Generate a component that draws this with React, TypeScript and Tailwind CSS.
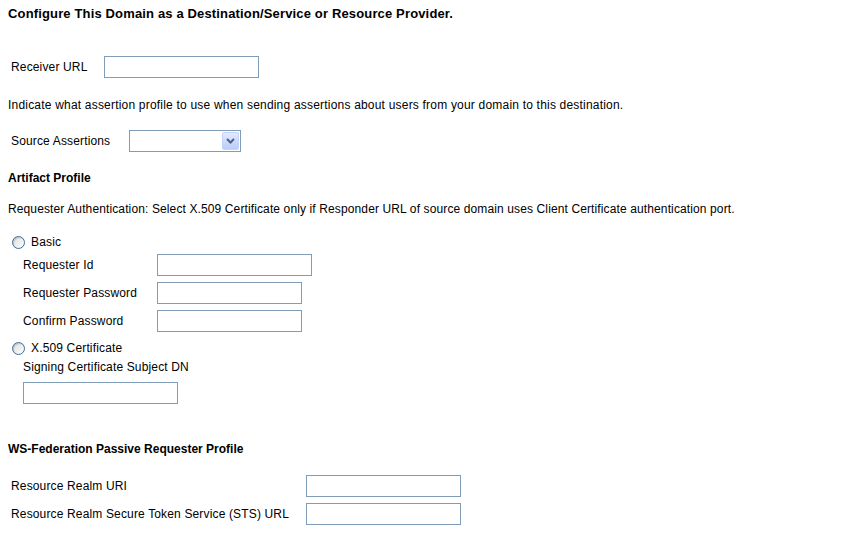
import React from 'react';

const TextBox = ({ w }: { w: string }) => (
  <div className={`h-[22px] ${w} border border-[#7f9db9] bg-white`} />
);

const Radio = ({ label }: { label: string }) => (
  <div className="flex items-center h-4 ml-[4px]">
    <span className="w-[13px] h-[13px] rounded-full border border-[#3e6e99] bg-gradient-to-br from-[#dcdcd7] to-white shadow-[inset_1px_1px_1px_rgba(0,0,0,0.15)]" />
    <span className="ml-[6px]">{label}</span>
  </div>
);

export default function App() {
  return (
    <div className="w-[850px] h-[536px] bg-white text-black text-[12px] leading-4 tracking-[0.15px] pl-[8px] pt-[5px] overflow-hidden" style={{ fontFamily: '"Liberation Sans", Arial, sans-serif' }}>
      <div className="font-bold text-[13px] tracking-[0.15px] h-4 pt-[1px]">Configure This Domain as a Destination/Service or Resource Provider.</div>

      <div className="flex items-center mt-[35px] ml-[3px]">
        <span className="w-[93px]">Receiver URL</span>
        <TextBox w="w-[155px]" />
      </div>

      <div className="mt-[18px] h-4 pt-[1px] tracking-[0.2px]">Indicate what assertion profile to use when sending assertions about users from your domain to this destination.</div>

      <div className="flex items-center mt-[18px] ml-[3px]">
        <span className="w-[118px]">Source Assertions</span>
        <div className="h-[22px] w-[112px] border border-[#7f9db9] bg-white flex justify-end p-[1px]">
          <div className="w-[17px] h-full rounded-[2px] bg-gradient-to-b from-[#e1eafe] to-[#b9cdfb] border border-[#c3d3fd] flex items-center justify-center">
            <svg width="9" height="6" viewBox="0 0 9 6">
              <path d="M1 1 L4.5 4.5 L8 1" fill="none" stroke="#4d6185" strokeWidth="2" />
            </svg>
          </div>
        </div>
      </div>

      <div className="font-bold tracking-normal mt-[17px] h-4 pt-[1px]">Artifact Profile</div>

      <div className="mt-[15px] h-4 pt-[1px] tracking-[0.12px]">Requester Authentication: Select X.509 Certificate only if Responder URL of source domain uses Client Certificate authentication port.</div>

      <div className="mt-[17px] pt-[1px]">
        <Radio label="Basic" />
      </div>

      <div className="ml-[15px]">
        <div className="flex items-center mt-[4px]">
          <span className="w-[134px]">Requester Id</span>
          <TextBox w="w-[155px]" />
        </div>
        <div className="flex items-center mt-[6px]">
          <span className="w-[134px]">Requester Password</span>
          <TextBox w="w-[145px]" />
        </div>
        <div className="flex items-center mt-[6px]">
          <span className="w-[134px]">Confirm Password</span>
          <TextBox w="w-[145px]" />
        </div>
      </div>

      <div className="mt-[7px] pt-[1px]">
        <Radio label="X.509 Certificate" />
      </div>

      <div className="ml-[15px]">
        <div className="mt-[2px] h-4 pt-[1px]">Signing Certificate Subject DN</div>
        <div className="mt-[8px]">
          <TextBox w="w-[155px]" />
        </div>
      </div>

      <div className="font-bold tracking-normal mt-[36px] h-4 pt-[1px]">WS-Federation Passive Requester Profile</div>

      <div className="ml-[3px]">
        <div className="flex items-center mt-[19px]">
          <span className="w-[295px]">Resource Realm URI</span>
          <TextBox w="w-[155px]" />
        </div>
        <div className="flex items-center mt-[6px]">
          <span className="w-[295px]">Resource Realm Secure Token Service (STS) URL</span>
          <TextBox w="w-[155px]" />
        </div>
      </div>
    </div>
  );
}
